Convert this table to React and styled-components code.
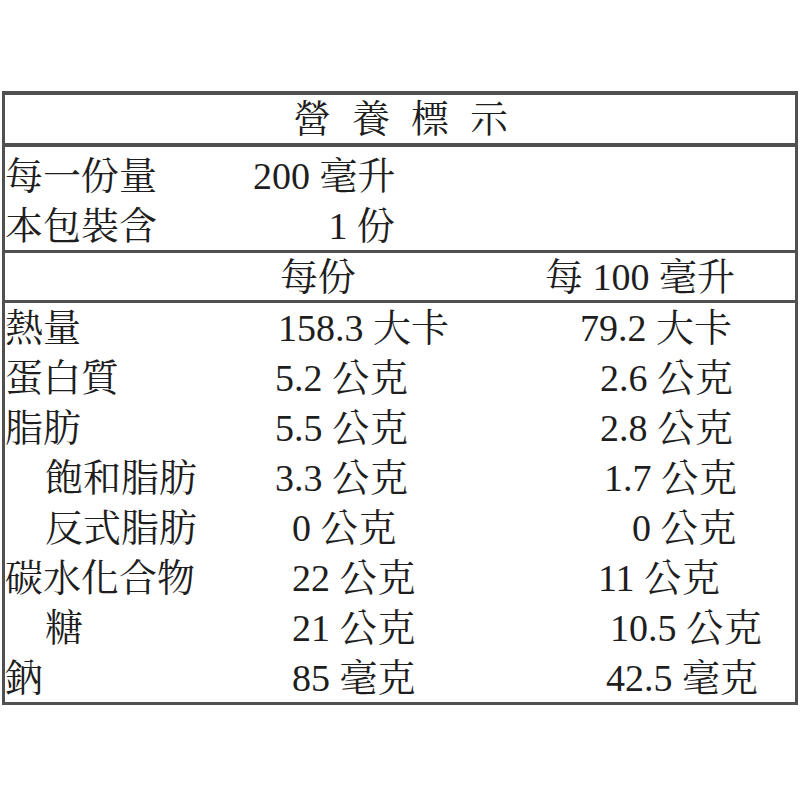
import styled, { createGlobalStyle } from "styled-components";

const GlobalStyle = createGlobalStyle`
  html, body {
    margin: 0;
    padding: 0;
    background: #fff;
  }
  body {
    font-family: "Liberation Serif", "Noto Serif CJK TC", "Noto Sans CJK TC", serif;
    color: #1e1e1e;
  }
`;

const LINE = "#505050";

const Label = styled.section`
  // .nutrition-label
  box-sizing: border-box;
  width: 796px;
  height: 614px;
  margin: 91px 0 0 2px;
  border: 3px solid ${LINE};
  border-top-width: 4px;
  font-size: 38px;
  line-height: 1;
`;

const TitleRow = styled.h2`
  // .label-title
  margin: 0;
  height: 48px;
  display: flex;
  align-items: center;
  justify-content: center;
  padding-left: 22px;
  font-size: 38px;
  font-weight: 400;
  letter-spacing: 21px;
  border-bottom: 4px solid ${LINE};
`;

const ServingBlock = styled.div`
  // .serving-info
  padding: 4px 0 0;
  height: 99px;
  border-bottom: 3px solid ${LINE};
`;

const ServingRow = styled.div`
  display: grid;
  grid-template-columns: 248px 142px;
  align-items: center;
  height: 50px;
`;

const HeaderRow = styled.div`
  // .column-heads
  display: grid;
  grid-template-columns: 265px 270px 1fr;
  align-items: center;
  height: 47px;
  border-bottom: 3px solid ${LINE};
`;

const NutrientRow = styled.div`
  display: grid;
  grid-template-columns: 265px 270px 1fr;
  align-items: center;
  height: 50px;
`;

const Name = styled.span`
  padding-left: ${(p) => (p.$sub ? 40 : 0)}px;
  white-space: nowrap;
`;

const Value = styled.span`
  padding-left: ${(p) => p.$x || 0}px;
  text-align: ${(p) => (p.$right ? "right" : "left")};
  white-space: nowrap;
`;

const nutrients = [
  { name: "熱量", a: "158.3 大卡", ax: 8, b: "79.2 大卡", bx: 40 },
  { name: "蛋白質", a: "5.2 公克", ax: 5, b: "2.6 公克", bx: 60 },
  { name: "脂肪", a: "5.5 公克", ax: 5, b: "2.8 公克", bx: 60 },
  { name: "飽和脂肪", sub: true, a: "3.3 公克", ax: 5, b: "1.7 公克", bx: 64 },
  { name: "反式脂肪", sub: true, a: "0 公克", ax: 22, b: "0 公克", bx: 92 },
  { name: "碳水化合物", a: "22 公克", ax: 22, b: "11 公克", bx: 58 },
  { name: "糖", sub: true, a: "21 公克", ax: 22, b: "10.5 公克", bx: 70 },
  { name: "鈉", a: "85 毫克", ax: 22, b: "42.5 毫克", bx: 66 },
];

export default function App() {
  return (
    <>
      <GlobalStyle />
      <Label>
        <TitleRow>營養標示</TitleRow>
        <ServingBlock>
          <ServingRow>
            <Name>每一份量</Name>
            <Value $right>200 毫升</Value>
          </ServingRow>
          <ServingRow>
            <Name>本包裝含</Name>
            <Value $right>1 份</Value>
          </ServingRow>
        </ServingBlock>
        <HeaderRow>
          <span />
          <Value $x={10}>每份</Value>
          <Value $x={5}>每 100 毫升</Value>
        </HeaderRow>
        {nutrients.map((n) => (
          <NutrientRow key={n.name}>
            <Name $sub={n.sub}>{n.name}</Name>
            <Value $x={n.ax}>{n.a}</Value>
            <Value $x={n.bx}>{n.b}</Value>
          </NutrientRow>
        ))}
      </Label>
    </>
  );
}
